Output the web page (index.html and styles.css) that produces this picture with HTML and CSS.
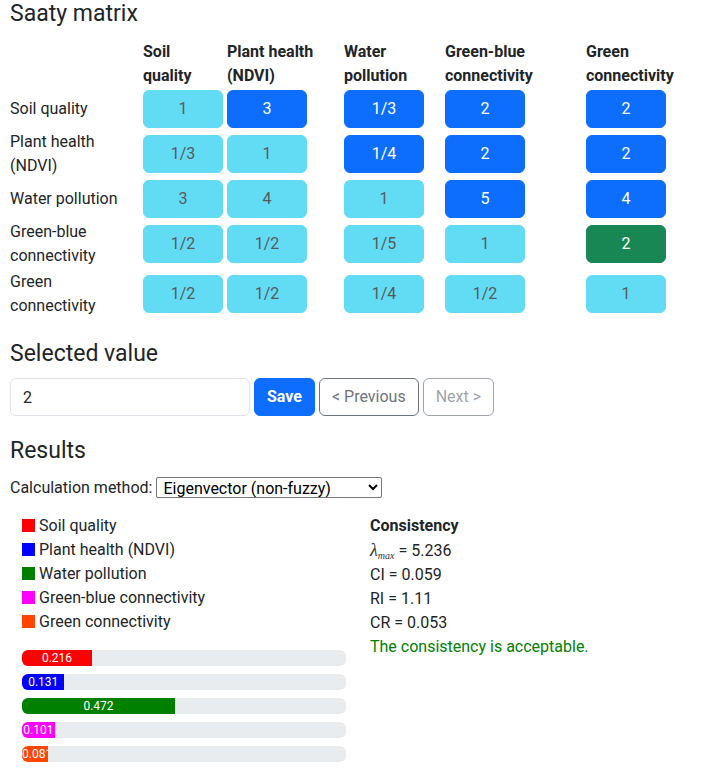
FILE: index.html
```html
<!DOCTYPE html>
<html lang="en">
<head>
<meta charset="utf-8">
<title>Saaty matrix</title>
<link rel="stylesheet" href="styles.css">
</head>
<body>
<div class="container">
  <h4 class="title">Saaty matrix</h4>
  <div class="matrix">
    <div class="corner"></div>
    <div class="colhead">Soil<br>quality</div>
    <div class="colhead">Plant health<br>(NDVI)</div>
    <div class="colhead">Water<br>pollution</div>
    <div class="colhead">Green-blue<br>connectivity</div>
    <div class="colhead">Green<br>connectivity</div>

    <div class="rowhead">Soil quality</div>
    <div class="cell"><button class="btn btn-info" disabled>1</button></div>
    <div class="cell"><button class="btn btn-primary">3</button></div>
    <div class="cell"><button class="btn btn-primary">1/3</button></div>
    <div class="cell"><button class="btn btn-primary">2</button></div>
    <div class="cell"><button class="btn btn-primary">2</button></div>

    <div class="rowhead">Plant health (NDVI)</div>
    <div class="cell"><button class="btn btn-info" disabled>1/3</button></div>
    <div class="cell"><button class="btn btn-info" disabled>1</button></div>
    <div class="cell"><button class="btn btn-primary">1/4</button></div>
    <div class="cell"><button class="btn btn-primary">2</button></div>
    <div class="cell"><button class="btn btn-primary">2</button></div>

    <div class="rowhead">Water pollution</div>
    <div class="cell"><button class="btn btn-info" disabled>3</button></div>
    <div class="cell"><button class="btn btn-info" disabled>4</button></div>
    <div class="cell"><button class="btn btn-info" disabled>1</button></div>
    <div class="cell"><button class="btn btn-primary">5</button></div>
    <div class="cell"><button class="btn btn-primary">4</button></div>

    <div class="rowhead">Green-blue connectivity</div>
    <div class="cell"><button class="btn btn-info" disabled>1/2</button></div>
    <div class="cell"><button class="btn btn-info" disabled>1/2</button></div>
    <div class="cell"><button class="btn btn-info" disabled>1/5</button></div>
    <div class="cell"><button class="btn btn-info" disabled>1</button></div>
    <div class="cell"><button class="btn btn-success">2</button></div>

    <div class="rowhead">Green connectivity</div>
    <div class="cell"><button class="btn btn-info" disabled>1/2</button></div>
    <div class="cell"><button class="btn btn-info" disabled>1/2</button></div>
    <div class="cell"><button class="btn btn-info" disabled>1/4</button></div>
    <div class="cell"><button class="btn btn-info" disabled>1/2</button></div>
    <div class="cell"><button class="btn btn-info" disabled>1</button></div>
  </div>

  <h4 class="section-title">Selected value</h4>
  <div class="value-row">
    <input class="value-input" type="text" value="2">
    <button class="btn btn-save">Save</button>
    <button class="btn btn-outline">&lt; Previous</button>
    <button class="btn btn-outline btn-disabled" disabled>Next &gt;</button>
  </div>

  <h4 class="section-title">Results</h4>
  <div class="method">
    <label for="method">Calculation method:</label>
    <select id="method" class="method-select">
      <option>Eigenvector (non-fuzzy)</option>
    </select>
  </div>

  <div class="results">
    <div class="left">
      <ul class="legend">
        <li><span class="swatch sw-red"></span>Soil quality</li>
        <li><span class="swatch sw-blue"></span>Plant health (NDVI)</li>
        <li><span class="swatch sw-green"></span>Water pollution</li>
        <li><span class="swatch sw-magenta"></span>Green-blue connectivity</li>
        <li><span class="swatch sw-orange"></span>Green connectivity</li>
      </ul>
      <div class="bars">
        <div class="progress"><div class="bar sw-red" style="width:21.6%">0.216</div></div>
        <div class="progress"><div class="bar sw-blue" style="width:13.1%">0.131</div></div>
        <div class="progress"><div class="bar sw-green" style="width:47.2%">0.472</div></div>
        <div class="progress"><div class="bar sw-magenta" style="width:10.1%">0.101</div></div>
        <div class="progress"><div class="bar sw-orange" style="width:8.1%">0.081</div></div>
      </div>
    </div>
    <div class="right">
      <div class="cons-title">Consistency</div>
      <div><span class="lambda">λ<sub>max</sub></span> = 5.236</div>
      <div>CI = 0.059</div>
      <div>RI = 1.11</div>
      <div>CR = 0.053</div>
      <div class="ok">The consistency is acceptable.</div>
    </div>
  </div>
</div>
</body>
</html>
```
FILE: styles.css
```css
* { box-sizing: border-box; }
body {
  margin: 0;
  font-family: Roboto, "Noto Sans", sans-serif;
  font-size: 16px;
  line-height: 1.5;
  color: #212529;
  background: #fff;
}
.container { padding: 0 10px; }
.title, .section-title {
  font-size: 23px;
  font-weight: 400;
  line-height: 1.2;
  margin: 0 0 12px;
}
.section-title { margin: 21px 0 11px; }

.matrix {
  display: grid;
  grid-template-columns: 133px 84px 117px 101px 141px 110px;
  align-items: center;
}
.colhead {
  font-weight: 700;
  align-self: end;
  padding-bottom: 1px;
}
.rowhead { padding: 1px 12px 1px 0; }
.cell { padding: 1px 0; }

.btn {
  font-family: inherit;
  font-size: 16px;
  line-height: 24px;
  padding: 6px 12px;
  border: 1px solid transparent;
  border-radius: 6px;
  background: #fff;
  color: #212529;
  cursor: pointer;
}
.cell .btn { width: 80px; padding: 6px 0; display: block; }
.btn-info { background: #62dcf5; border-color: #62dcf5; color: #595959; }
.btn-primary { background: #0d6efd; border-color: #0d6efd; color: #fff; }
.btn-success { background: #198754; border-color: #198754; color: #fff; }

.value-row { display: flex; gap: 4px; }
.value-input {
  width: 240px;
  height: 38px;
  padding: 6px 12px;
  font-family: inherit;
  font-size: 16px;
  color: #212529;
  border: 1px solid #dee2e6;
  border-radius: 6px;
}
.btn-save { background: #0d6efd; border-color: #0d6efd; color: #fff; font-weight: 700; }
.btn-outline { border-color: #6c757d; color: #6c757d; background: #fff; }
.btn-disabled { opacity: .65; }

.method {
  display: flex;
  align-items: center;
  gap: 4px;
  height: 24px;
}
.method-select {
  width: 226px;
  height: 21px;
  padding: 0 2px;
  font-family: inherit;
  font-size: 16px;
  line-height: 19px;
  color: #000;
  border: 1px solid #767676;
  border-radius: 2px;
  background: #fff;
}

.results {
  display: grid;
  grid-template-columns: 360px 1fr;
  margin-top: 14px;
}
.left { padding: 0 24px 0 12px; }
.legend { list-style: none; margin: 0; padding: 0; }
.legend li { display: flex; align-items: center; height: 24px; }
.swatch { width: 13px; height: 13px; margin-right: 4px; display: inline-block; }
.sw-red { background: #ff0000; }
.sw-blue { background: #0000ff; }
.sw-green { background: #008000; }
.sw-magenta { background: #ff00ff; }
.sw-orange { background: #ff4500; }

.bars { display: flex; flex-direction: column; gap: 8px; margin-top: 16px; }
.progress {
  height: 16px;
  background: #e9ecef;
  border-radius: 6px;
  overflow: hidden;
  display: flex;
}
.bar {
  height: 16px;
  color: #fff;
  font-size: 12px;
  line-height: 16px;
  text-align: center;
  white-space: nowrap;
  overflow: hidden;
}

.right div { line-height: 24px; }
.cons-title { font-weight: 700; }
.lambda { font-family: "Liberation Serif", "DejaVu Serif", serif; font-style: italic; font-size: 18px; color: #333; }
.lambda sub { font-size: 10px; vertical-align: -3px; line-height: 0; }
.ok { color: #008000; }
```
